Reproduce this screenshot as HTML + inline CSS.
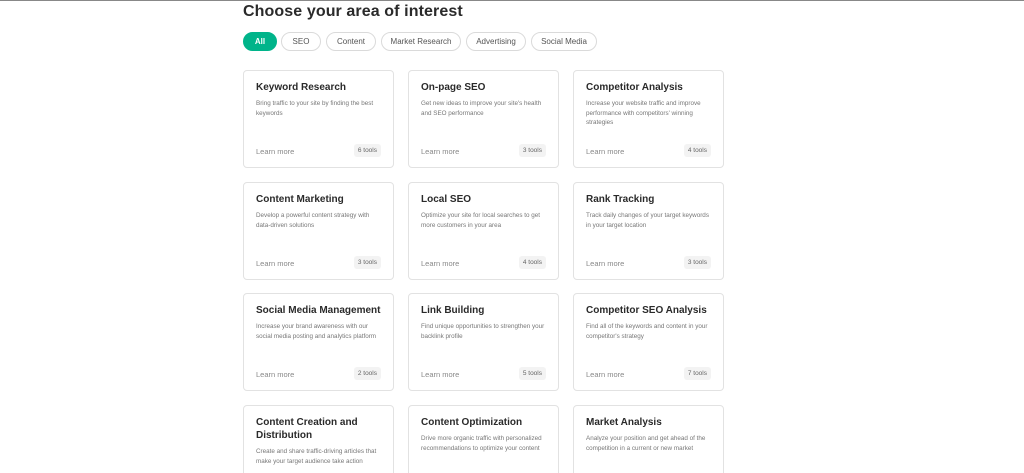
<html style="width:1024px;height:473px;overflow:hidden"><head><style>
body{margin:0;width:1024px;height:473px;overflow:hidden;background:#fff;font-family:"Liberation Sans",sans-serif;position:relative}
.topline{position:absolute;left:0;top:0;width:1024px;height:1px;background:#888}
h1{position:absolute;left:243px;top:3px;margin:0;font-size:16px;font-weight:bold;color:#2a2a2a;letter-spacing:0.1px}
.pill{position:absolute;top:32px;height:17px;border:1px solid #dadada;border-radius:10px;font-size:8px;color:#555;line-height:17px;text-align:center;box-sizing:content-box}
.card{position:absolute;width:151px;height:98px;border:1px solid #e2e2e2;border-radius:4px;box-sizing:border-box}
.card b{position:absolute;left:12px;top:10px;font-size:10px;color:#2a2a2a;white-space:nowrap;line-height:13px}
.card p{position:absolute;left:12px;top:28px;margin:0;font-size:6.3px;color:#777;line-height:9.5px;width:126px}
.card .lm{position:absolute;left:12px;top:76px;font-size:7.5px;color:#888}
.card .t{position:absolute;right:12px;top:73px;font-size:6.5px;color:#666;background:#f3f3f3;border-radius:3px;padding:3px 4px}
</style></head><body>
<div class="topline"></div>
<h1>Choose your area of interest</h1>
<div class="pill" style="left:243px;width:32px;background:#00b48a;border-color:#00b48a;color:#fff;font-weight:bold">All</div>
<div class="pill" style="left:281px;width:38px">SEO</div>
<div class="pill" style="left:326px;width:48px">Content</div>
<div class="pill" style="left:381px;width:78px">Market Research</div>
<div class="pill" style="left:466px;width:58px">Advertising</div>
<div class="pill" style="left:531px;width:64px">Social Media</div>

<div class="card" style="left:243px;top:70px"><b>Keyword Research</b><p>Bring traffic to your site by finding the best keywords</p><span class="lm">Learn more</span><span class="t">6 tools</span></div>
<div class="card" style="left:408px;top:70px"><b>On-page SEO</b><p>Get new ideas to improve your site's health and SEO performance</p><span class="lm">Learn more</span><span class="t">3 tools</span></div>
<div class="card" style="left:573px;top:70px"><b>Competitor Analysis</b><p>Increase your website traffic and improve performance with competitors' winning strategies</p><span class="lm">Learn more</span><span class="t">4 tools</span></div>

<div class="card" style="left:243px;top:182px"><b>Content Marketing</b><p>Develop a powerful content strategy with data-driven solutions</p><span class="lm">Learn more</span><span class="t">3 tools</span></div>
<div class="card" style="left:408px;top:182px"><b>Local SEO</b><p>Optimize your site for local searches to get more customers in your area</p><span class="lm">Learn more</span><span class="t">4 tools</span></div>
<div class="card" style="left:573px;top:182px"><b>Rank Tracking</b><p>Track daily changes of your target keywords in your target location</p><span class="lm">Learn more</span><span class="t">3 tools</span></div>

<div class="card" style="left:243px;top:293px"><b>Social Media Management</b><p>Increase your brand awareness with our social media posting and analytics platform</p><span class="lm">Learn more</span><span class="t">2 tools</span></div>
<div class="card" style="left:408px;top:293px"><b>Link Building</b><p>Find unique opportunities to strengthen your backlink profile</p><span class="lm">Learn more</span><span class="t">5 tools</span></div>
<div class="card" style="left:573px;top:293px"><b>Competitor SEO Analysis</b><p>Find all of the keywords and content in your competitor's strategy</p><span class="lm">Learn more</span><span class="t">7 tools</span></div>

<div class="card" style="left:243px;top:405px;height:80px"><b>Content Creation and<br>Distribution</b><p style="top:41px">Create and share traffic-driving articles that make your target audience take action</p></div>
<div class="card" style="left:408px;top:405px;height:80px"><b>Content Optimization</b><p>Drive more organic traffic with personalized recommendations to optimize your content</p></div>
<div class="card" style="left:573px;top:405px;height:80px"><b>Market Analysis</b><p>Analyze your position and get ahead of the competition in a current or new market</p></div>
</body></html>
